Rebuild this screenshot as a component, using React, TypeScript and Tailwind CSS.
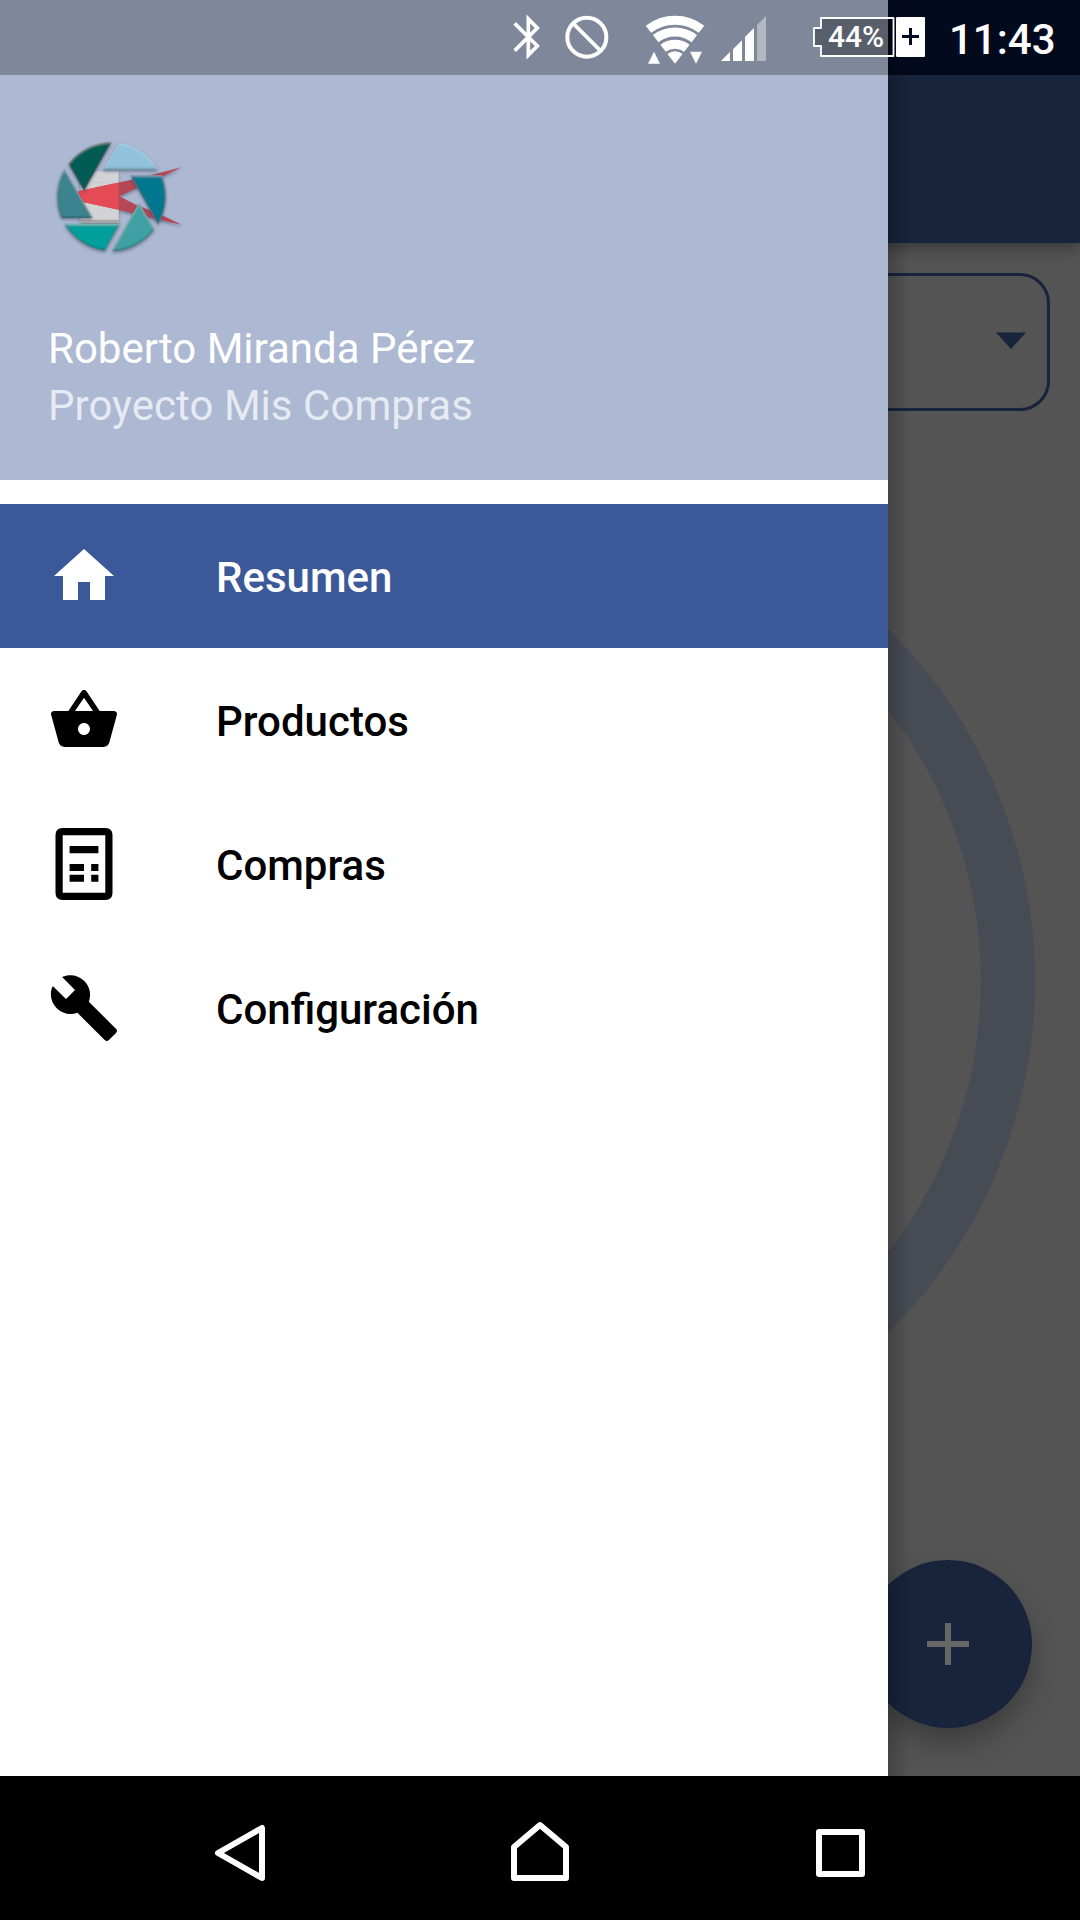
import React from 'react';

function BluetoothIcon() {
  return (
    <svg className="mt-[13.3px] ml-[512px] h-12 w-[30px]" viewBox="36 40 90 144" fill="none" stroke="#fff" strokeWidth="11">
      <path d="M44 71 L112 139 L85 166 V58 L112 85 L44 153" />
    </svg>
  );
}

function BlockedIcon() {
  return (
    <svg className="mt-[13.3px] ml-[20.7px] h-12 w-12" viewBox="188 40 144 144" fill="none" stroke="#fff" strokeWidth="12">
      <circle cx="259.500" cy="112.500" r="58.500" />
      <path d="M219 72 L300 153" strokeWidth="11" />
    </svg>
  );
}

function WifiIcon() {
  return (
    <svg className="mt-[14.3px] ml-[33.3px] h-[51px] w-[62px]" viewBox="432 43 186 153">
      <g fill="none" stroke="#fff" strokeWidth="27">
        <path d="M445.300 88.600 A130.500 130.500 0 0 1 604.700 88.600" />
        <path d="M467 116.800 A95 95 0 0 1 583 116.800" />
        <path d="M489.300 145.700 A58.500 58.500 0 0 1 560.700 145.700" />
      </g>
      <g fill="#fff">
        <path d="M525 192 L502.400 162.700 A37 37 0 0 1 547.600 162.700 Z" />
        <path d="M462 156 L480 192 H444 Z" />
        <path d="M570 156 H606 L588 192 Z" />
      </g>
    </svg>
  );
}

function SignalIcon() {
  return (
    <svg className="mt-[14px] ml-[14px] h-[51px] w-12" viewBox="660 42 144 153" fill="#fff">
      <path d="M663 183 L690 156 V183 Z" />
      <path d="M699 148 L726 121 V183 H699 Z" />
      <path d="M735 111 L762 84 V183 H735 Z" />
      <path d="M771 75 L798 48 V183 H771 Z" opacity="0.4" />
    </svg>
  );
}

function Battery() {
  return (
    <div className="relative mt-[13px] ml-[42px] h-12 w-[118px]">
      <svg className="h-12 w-[118px]" viewBox="90 39 354 144">
        <path d="M123 54 H340.500 V168 H123 V138 H102 V84 H123 Z" fill="#000" fillOpacity="0.3" />
        <path d="M123 84 H102 V138 H123 V168 H340.500 V54 H123 Z" fill="none" stroke="#fff" strokeWidth="5.500" strokeLinejoin="round" />
        <rect x="348" y="51" width="87" height="120" rx="4" fill="#fff" />
        <path d="M366 109.500 H417 M391.500 84 V135" stroke="#040a1e" strokeWidth="9" />
      </svg>
      <span className="absolute top-[8px] left-[18px] text-[30px] leading-8 font-medium">44%</span>
    </div>
  );
}

function StatusBar() {
  return (
    <div className="absolute inset-x-0 top-0 flex h-[75px] items-start text-white">
      <BluetoothIcon />
      <BlockedIcon />
      <WifiIcon />
      <SignalIcon />
      <Battery />
      <span className="mt-[15px] ml-[21px] text-[42px] leading-[50px] font-medium">11:43</span>
    </div>
  );
}

function Logo() {
  return (
    <svg className="ml-10 h-[150px] w-40" viewBox="0 0 480 450">
      <defs>
        <filter id="lift" x="-20%" y="-20%" width="140%" height="150%">
          <feDropShadow dx="0" dy="5" stdDeviation="4" floodColor="#2a3550" floodOpacity="0.5" />
        </filter>
        <filter id="bevel" x="-10%" y="-10%" width="120%" height="120%">
          <feGaussianBlur in="SourceAlpha" stdDeviation="2.500" result="b" />
          <feOffset in="b" dy="-4" dx="-1" result="o" />
          <feComposite in="SourceAlpha" in2="o" operator="out" result="edge" />
          <feFlood floodColor="#002028" floodOpacity="0.7" />
          <feComposite in2="edge" operator="in" result="dark" />
          <feOffset in="b" dy="4" result="p" />
          <feComposite in="SourceAlpha" in2="p" operator="out" result="edge2" />
          <feFlood floodColor="#fff" floodOpacity="0.3" />
          <feComposite in2="edge2" operator="in" result="light" />
          <feMerge>
            <feMergeNode in="SourceGraphic" />
            <feMergeNode in="dark" />
            <feMergeNode in="light" />
          </feMerge>
        </filter>
        <clipPath id="sheet">
          <path d="M100 154 H236 V309 H100 Z" />
        </clipPath>
      </defs>
      <g filter="url(#lift)">
        <path d="M122 154 H236 V309 H122 Z" fill="#d2d3d4" />
        <path d="M122 299 H236 V309 H122 Z" fill="#a9a9aa" />
        <path d="M158 187 H208 M170 198 H216 M160 207 H214" stroke="#bfc0ca" strokeWidth="2" />
        <path d="M115 214 L275 179 L370 156 L425 142 L370 168 L290 204 L238 229 L290 256 L345 276 L427 315 L350 297 L236 269 L115 243 Z" fill="#b64655" />
        <path d="M115 214 L275 179 L236 229 V269 L115 243 Z" fill="#e44b55" clipPath="url(#sheet)" />
      </g>
      <g filter="url(#lift)">
        <g filter="url(#bevel)">
          <path d="M85 131 A163 163 0 0 1 215 66 L132 213 Z" fill="#005b55" />
          <path d="M236 69 A163 163 0 0 1 354 149 H189 Z" fill="#90c2dc" />
          <path d="M271 166 H366 A163 163 0 0 1 354 312 Z" fill="#00768f" />
          <path d="M297 248 L343 328 A163 163 0 0 1 215 394 Z" fill="#40a0a3" />
          <path d="M73 311 H240 L195 392 A163 163 0 0 1 73 311 Z" fill="#009f9b" />
          <path d="M73 147 L158 294 H64 A163 163 0 0 1 73 147 Z" fill="#3b838f" />
        </g>
      </g>
    </svg>
  );
}

const HOME = 'M10 20v-6h4v6h5v-8h3L12 3 2 12h3v8z';
const BASKET =
  'M17.210 9l-4.380-6.560c-.190-.280-.510-.420-.830-.420-.320 0-.640.140-.830.430L6.790 9H2c-.550 0-1 .450-1 1 0 .090.010.180.040.270l2.540 9.270c.230.840 1 1.460 1.920 1.460h13c.920 0 1.690-.620 1.930-1.460l2.540-9.270L23 10c0-.550-.450-1-1-1h-4.790zM9 9l3-4.400L15 9H9zm3 8c-1.100 0-2-.900-2-2s.900-2 2-2 2 .900 2 2-.900 2-2 2z';
const RECEIPT =
  'M4.900 0h14.200q2.400 0 2.400 2.400v19.200q0 2.400-2.400 2.400H4.900q-2.400 0-2.400-2.400V2.400Q2.500 0 4.900 0zM4.900 2.400v19.200h14.200V2.400zM7.200 6h9.600v2.400H7.200zM7.200 12h4.800v2.350H7.200zM14.400 12h2.400v2.350h-2.400zM7.200 15.600h4.800v2.350H7.200zM14.400 15.600h2.400v2.350h-2.400z';
const WRENCH =
  'M22.700 19l-9.100-9.100c.900-2.300.400-5-1.500-6.900-2-2-5-2.400-7.400-1.300L9 6 6 9 1.600 4.700C.4 7.100.9 10.100 2.900 12.100c1.900 1.900 4.600 2.400 6.900 1.500l9.100 9.100c.4.4 1 .4 1.400 0l2.300-2.300c.5-.4.5-1.100.1-1.400z';

const items = [
  { label: 'Resumen', icon: HOME, active: true },
  { label: 'Productos', icon: BASKET, active: false },
  { label: 'Compras', icon: RECEIPT, active: false },
  { label: 'Configuración', icon: WRENCH, active: false },
];

function Drawer() {
  return (
    <aside className="absolute top-0 left-0 flex h-[1776px] w-[888px] flex-col bg-white">
      <div className="h-[75px] shrink-0 bg-[#7f889a]" />
      <header className="h-[405px] shrink-0 bg-[#adb8d3] pt-[45px] text-[42px] leading-[57px]">
        <Logo />
        <p className="mt-[50px] pl-12 text-white">Roberto Miranda Pérez</p>
        <p className="pl-12 tracking-[0.04px] text-[#e6eaf2]">Proyecto Mis Compras</p>
      </header>
      <nav className="mt-6 flex flex-col">
        {items.map((item) => (
          <a
            key={item.label}
            className={
              item.active
                ? 'flex h-36 items-center bg-[#3b5998] pl-12 text-white'
                : 'flex h-36 items-center pl-12 text-black'
            }
          >
            <svg className="size-[72px]" viewBox="0 0 24 24" fill="currentColor" fillRule="evenodd">
              <path d={item.icon} />
            </svg>
            <span className="ml-24 pt-1 text-[42px] leading-[50px] font-medium">{item.label}</span>
          </a>
        ))}
      </nav>
      <div className="absolute top-0 left-full h-full w-[22px] bg-linear-to-r from-black/20 to-transparent" />
    </aside>
  );
}

function Summary() {
  return (
    <main className="relative flex h-[1776px] flex-col overflow-hidden bg-[#545454]">
      <div className="h-[75px] shrink-0 bg-[#040a1e]" />
      <div className="h-[168px] shrink-0 bg-[#18233c] shadow-[0_6px_14px_rgba(0,0,0,0.3)]" />
      <div className="mx-[30px] mt-[30px] flex h-[138px] shrink-0 items-center justify-end rounded-[30px] border-[3px] border-[#18233c] pr-[21px]">
        <svg className="mb-[3px] h-[17px] w-[30px]" viewBox="0 0 30 17" fill="#18233c">
          <path d="M0 0.500 H30 L15 17 Z" />
        </svg>
      </div>
      <div className="mt-[75px] size-[990px] shrink-0 self-center rounded-full border-[54px] border-[#474b54]" />
      <button className="absolute right-12 bottom-12 flex size-[168px] items-center justify-center rounded-full bg-[#18233c] shadow-[0_16px_28px_rgba(0,0,0,0.27)]">
        <svg className="size-[42px]" viewBox="0 0 42 42" fill="#666">
          <path d="M18 0h6v18h18v6H24v18h-6V24H0v-6h18z" />
        </svg>
      </button>
    </main>
  );
}

function NavigationBar() {
  return (
    <footer className="flex h-36 items-center bg-black">
      <svg className="ml-[210px] h-[66px] w-[60px]" viewBox="210 1815 60 66" fill="none" stroke="#fff" strokeWidth="6" strokeLinejoin="round">
        <path d="M262 1828 V1878 L218 1853 Z" />
      </svg>
      <svg className="ml-[236px] h-[68px] w-[68px]" viewBox="506 1814 68 68" fill="none" stroke="#fff" strokeWidth="6" strokeLinejoin="round">
        <path d="M540 1825 L566 1847 V1878 H514 V1847 Z" />
      </svg>
      <svg className="ml-[236px] h-[60px] w-[60px]" viewBox="810 1818 60 60" fill="none" stroke="#fff" strokeWidth="6" strokeLinejoin="round">
        <path d="M819 1832 H862 V1874 H819 Z" />
      </svg>
    </footer>
  );
}

export default function App() {
  return (
    <div className="relative h-[1920px] w-[1080px] overflow-hidden bg-black font-['Roboto',sans-serif]">
      <Summary />
      <Drawer />
      <StatusBar />
      <NavigationBar />
    </div>
  );
}
